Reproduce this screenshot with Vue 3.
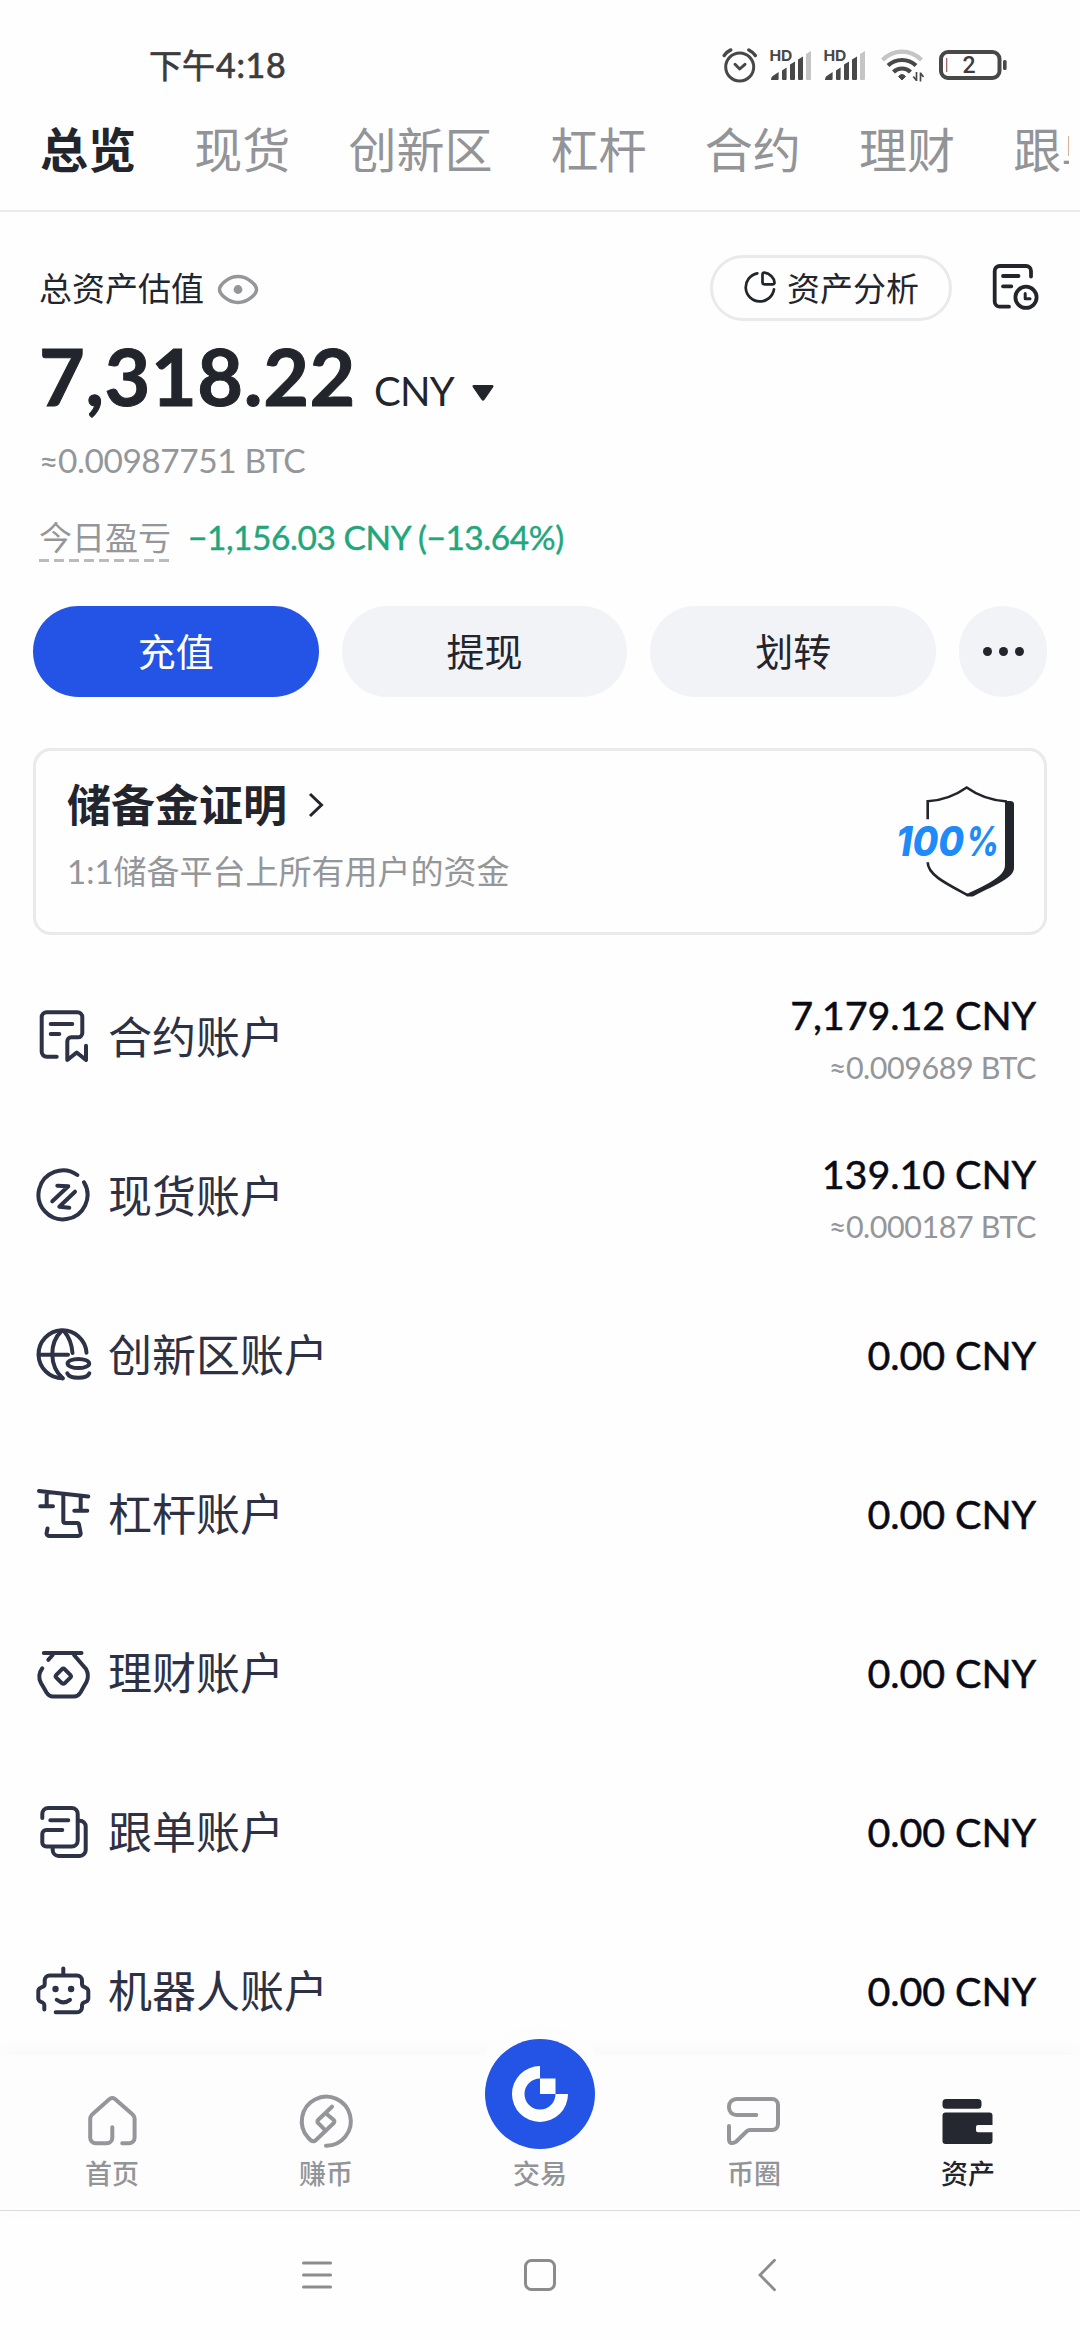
<script setup>
const tabs = ['总览', '现货', '创新区', '杠杆', '合约', '理财', '跟单']

const accounts = [
  {
    name: '合约账户',
    value: '7,179.12 CNY',
    btc: '≈0.009689 BTC',
    paths: [
      'M23.7 49.7H13.7a5 5 0 0 1-5-5V10.3a5 5 0 0 1 5-5H44.3a5 5 0 0 1 5 5V26a4.3 4.3 0 0 1-4.3 4.3H38.3a4 4 0 0 0-4 4V53L43.7 45.5 53 53V38.7',
      'M17.7 17H39.3M17.7 27H26.3'
    ]
  },
  {
    name: '现货账户',
    value: '139.10 CNY',
    btc: '≈0.000187 BTC',
    paths: [
      'M44.3 9A24.5 24.5 0 1 0 51 16.3',
      'M24.3 19.7L35.3 20.3 19.3 35.3M42 25.7L26.3 40.7 36.3 41.7'
    ]
  },
  {
    name: '创新区账户',
    value: '0.00 CNY',
    paths: [
      'M29.7 53.3A24 24 0 1 1 53.5 27.7',
      'M28.5 6C16 18 16 41 29.7 53.3M31 6C36 12 39 20 39.5 28M5.7 29.7H35',
      'M34.6 38.5a10.8 4.6 0 1 0 21.6 0a10.8 4.6 0 1 0-21.6 0z',
      'M34.3 48.3C37 54.2 53.6 54.2 56.3 48.3'
    ]
  },
  {
    name: '杠杆账户',
    value: '0.00 CNY',
    paths: [
      'M6 7L55.3 12.6M13.7 9V22.2M7.3 22.2H20M47.7 13V26.7M41.3 26.7H54.3',
      'M30.3 10V37a2 2 0 0 0 2 2H44a2 2 0 0 1 2 1.7l1.7 8.6a2.4 2.4 0 0 1-2.4 2.6H16a2.4 2.4 0 0 1-2.4-2.8L14.5 44.5'
    ]
  },
  {
    name: '理财账户',
    value: '0.00 CNY',
    paths: [
      'M10.8 10.1H48.5M19.7 12L15.3 16.8',
      'M41 12L53 26Q56.5 32.5 53.5 39L47.5 49.5Q45 53.5 41 53.5H20Q16 53.5 13.5 49.5L8 40Q4 32.5 9.3 25.3',
      'M28.8 26.3L23.3 31.8Q22 33.2 23.3 34.6L28.8 40.2Q30.3 41.4 31.8 40.2L37.3 34.6Q38.6 33.2 37.3 31.8L31.8 26.3Q30.3 25 28.8 26.3z'
    ]
  },
  {
    name: '跟单账户',
    value: '0.00 CNY',
    paths: [
      'M9.3 16V12a6 6 0 0 1 6-6H38.7a6 6 0 0 1 6 6V38.6a6 6 0 0 1-6 6H13.3a4 4 0 0 1-4-4V32a4 4 0 0 1 4-4H29.3',
      'M17.3 18.3H35.3M46 18.7H46.7a6 6 0 0 1 6 6V47.9a6 6 0 0 1-6 6H25.7a6 6 0 0 1-6-6V46'
    ]
  },
  {
    name: '机器人账户',
    value: '0.00 CNY',
    paths: [
      'M30.3 7.5V14',
      'M11.3 48.4V44a3 3 0 0 0-1.8-2.5L7.3 40.5a3.5 3.5 0 0 1-2-3V30a3.5 3.5 0 0 1 2-3L9.7 25.8a3 3 0 0 0 2-2.8V19.4a5 5 0 0 1 5-5H44a5 5 0 0 1 5 5V23a3 3 0 0 0 2 2.8L53.3 27a3.5 3.5 0 0 1 2 3V37.5a3.5 3.5 0 0 1-2 3L51 41.5a3 3 0 0 0-2 2.5V46.3a5 5 0 0 1-5 5H22.7',
      'M23.7 38.8Q30.3 44 37 38.8'
    ],
    dots: [[22.5, 28], [38.1, 28]]
  }
]
</script>

<template>
  <div class="page">
    <header class="status">
      <span class="time">下午<span class="clock">4:18</span></span>
      <div class="status-icons">
        <svg class="alarm" width="36" height="36" viewBox="0 0 36 36" fill="none" stroke="#484848" stroke-width="3" stroke-linecap="round" stroke-linejoin="round">
          <circle cx="17.7" cy="20" r="14" />
          <path d="M13 17.3L17.7 22 23 17.3" />
          <path d="M2.2 8.5Q4.5 5 8.8 2.9M26.8 2.9Q31 5 33.3 8.5" stroke-width="3.4" />
        </svg>
        <svg v-for="n in 2" :key="n" class="signal" width="43" height="34" viewBox="0 0 43 34" fill="#484848">
          <text x="0.4" y="12.8" textLength="23" lengthAdjust="spacingAndGlyphs" class="hd">HD</text>
          <path d="M2 32q0-3.5 2.5-4.5L9.6 24v7q0 1-1 1zM13 22.5l4.6-3V31q0 1-1 1h-2.6q-1 0-1-1zM21 16.6l5-3V31q0 1-1 1h-3q-1 0-1-1zM29 11.5l5-3V31q0 1-1 1h-3q-1 0-1-1z" />
          <path d="M37 6l5-3V31q0 1-1 1h-3q-1 0-1-1z" fill="#c5c5c5" />
        </svg>
        <svg class="wifi" width="44" height="36" viewBox="0 0 44 36" fill="none" stroke="#484848" stroke-width="4.2">
          <path d="M2.5 13Q11 4.6 22 4.6T41.5 13" stroke="#c5c5c5" />
          <path d="M8 18.5Q14 13 22 13T36 18.5" />
          <path d="M13.5 25Q17 21.5 22 21.5T30.5 25" />
          <path d="M18.5 29.5Q22 25.5 25.500 29.500L22 33z" fill="#484848" stroke-width="1" />
          <path d="M36.5 25v9M36.5 33.5l-3.2-4M40.5 34.500v-9M40.500 26l3 4" stroke-width="1.7" />
        </svg>
        <svg class="battery" width="70" height="32" viewBox="0 0 70 32">
          <rect x="2" y="3" width="58.5" height="26" rx="7" fill="none" stroke="#484848" stroke-width="4" />
          <path d="M7.7 9v14" stroke="#a5555a" stroke-width="1.2" />
          <rect x="64" y="11" width="3.6" height="10" rx="1.5" fill="#484848" />
          <text x="30" y="24" text-anchor="middle" class="level">2</text>
        </svg>
      </div>
    </header>

    <nav class="tabs">
      <span v-for="(tab, i) in tabs" :key="tab" class="tab" :class="{ active: i === 0 }">{{ tab }}</span>
    </nav>

    <main class="content">
      <section class="summary">
        <div class="summary-head">
          <span class="caption">总资产估值</span>
          <svg class="eye" width="42" height="32" viewBox="0 0 42 32" fill="none" stroke="#949699" stroke-width="3.5">
            <path d="M2.5 15.5C2.5 11 11 2.5 21 2.5S39.5 11 39.5 15.5 31 28.5 21 28.5 2.5 20 2.5 15.5z" />
            <circle cx="21" cy="15.5" r="4.4" fill="#949699" stroke="none" />
          </svg>
          <div class="analysis">
            <svg width="36" height="36" viewBox="0 0 36 36" fill="none" stroke="#23252c" stroke-width="2.7" stroke-linecap="round" stroke-linejoin="round">
              <path d="M14.3 3.3A14.2 14.2 0 1 0 31 19.3" />
              <path d="M19.5 4.500Q19.500 2.500 21.500 2.700C27 3.500 31.300 8 31.500 12.500Q31.500 14.300 29.500 14.300H21.500Q19.500 14.300 19.500 12.300z" />
            </svg>
            <span>资产分析</span>
          </div>
          <svg class="record" width="50" height="50" viewBox="0 0 50 50" fill="none" stroke="#23252c" stroke-width="3.8" stroke-linecap="round" stroke-linejoin="round">
            <path d="M18 43.7H8.7a5 5 0 0 1-5-5V8a5 5 0 0 1 5-5H35a5 5 0 0 1 5 5v5.5M12 13H27.5M12 23.3H20.3" />
            <circle cx="35" cy="34.3" r="10.6" />
            <path d="M34.2 30.5V35.8H39" stroke-width="3" />
          </svg>
        </div>
        <div class="balance">
          <span class="amount">7,318.22</span>
          <span class="unit">CNY</span>
          <svg width="24" height="18" viewBox="0 0 24 18"><path d="M3 1H21Q23.5 1 22 3.5L13.5 15.8Q12 17.6 10.5 15.8L2 3.5Q.5 1 3 1z" fill="#23252c" /></svg>
        </div>
        <div class="btc-total">≈0.00987751 BTC</div>
        <div class="pnl">
          <span class="pnl-label">今日盈亏</span>
          <span class="pnl-value">−1,156.03 CNY (−13.64%)</span>
        </div>
      </section>

      <section class="actions">
        <button class="action primary">充值</button>
        <button class="action">提现</button>
        <button class="action">划转</button>
        <button class="more"><i></i><i></i><i></i></button>
      </section>

      <section class="card">
        <div class="card-text">
          <h2>储备金证明
            <svg width="16" height="26" viewBox="0 0 16 26"><path d="M2 2L13.5 13 2 24" fill="none" stroke="#23252c" stroke-width="3" /></svg>
          </h2>
          <p>1:1储备平台上所有用户的资金</p>
        </div>
        <svg class="shield" width="124" height="120" viewBox="0 0 124 120">
          <path d="M32.7 38.3V20.3Q54 19 71.7 6.5Q89 19 112 20.5M32.7 81.3C32.7 94 52 103 72.5 114" fill="none" stroke="#23252c" stroke-width="2.6" />
          <path d="M110 20H116Q119 20.5 119 23V87C119 98 95 106 78 115.5H72L71 113.5C92 103 110 96 110 84z" fill="#23252c" />
          <text x="1" y="75" textLength="68" lengthAdjust="spacingAndGlyphs" class="full">100</text>
          <text x="71" y="75" textLength="33" lengthAdjust="spacingAndGlyphs" class="full">%</text>
        </svg>
      </section>

      <section class="accounts">
        <div v-for="a in accounts" :key="a.name" class="account">
          <svg width="60" height="60" viewBox="0 0 60 60" fill="none" stroke="#2e3247" stroke-width="4" stroke-linecap="round" stroke-linejoin="round">
            <path v-for="(d, i) in a.paths" :key="i" :d="d" />
            <circle v-for="(c, i) in a.dots || []" :key="'dot' + i" :cx="c[0]" :cy="c[1]" r="3.2" fill="#2e3247" stroke="none" />
          </svg>
          <span class="name">{{ a.name }}</span>
          <div class="figures">
            <div class="value">{{ a.value }}</div>
            <div v-if="a.btc" class="btc">{{ a.btc }}</div>
          </div>
        </div>
      </section>
    </main>

    <footer class="bottom">
      <div class="item">
        <svg width="60" height="60" viewBox="0 0 60 60" class="line-icon">
          <path d="M40.2 52.3H47a5.6 5.6 0 0 0 5.6-5.6V28q0-3-2.5-5L33 8q-2.7-2-5.4 0L10.7 23q-2.5 2-2.5 5V46.7a5.6 5.6 0 0 0 5.6 5.6H24.7a5.6 5.6 0 0 0 5.6-5.6V36.3" />
        </svg>
        <span>首页</span>
      </div>
      <div class="item">
        <svg width="60" height="60" viewBox="0 0 60 60" class="line-icon">
          <path d="M30 54.7A24.5 24.5 0 1 0 12 46.5L14.5 49q2.8 2.5 5.5 0L37.5 32.2q1.8-1.7 0-3.4L30 22.5" />
          <path d="M36 15.7L22.3 28.8q-1.8 1.7 0 3.4L29.5 39.5" />
        </svg>
        <span>赚币</span>
      </div>
      <div class="item">
        <div class="trade-btn">
          <svg width="56" height="56" viewBox="0 0 56 56" fill="#fff">
            <path d="M28 0A28 28 0 1 0 56 28H43.5A15.5 15.5 0 1 1 28 12.5z" />
            <path d="M28 12.5H43.5V28H28z" />
          </svg>
        </div>
        <span>交易</span>
      </div>
      <div class="item">
        <svg width="60" height="60" viewBox="0 0 60 60" class="line-icon">
          <path d="M32.3 24H12.5a7.5 7.5 0 0 1-7.5-7.5V15.5A7.5 7.5 0 0 1 12.5 8H48a6 6 0 0 1 6 6V33a6 6 0 0 1-6 6H26q-2 0-3.5 1.5L12 50.7Q5 54.5 5 48V35" />
        </svg>
        <span>币圈</span>
      </div>
      <div class="item current">
        <svg width="60" height="60" viewBox="0 0 60 60" fill="#262831">
          <rect x="4.5" y="8" width="39" height="9.7" rx="3.5" />
          <path d="M7.5 21.5H51.5a3 3 0 0 1 3 3V34H40a2 2 0 0 0-2 2v3.2a2 2 0 0 0 2 2H54.5V50a3 3 0 0 1-3 3H7.5a3 3 0 0 1-3-3V24.5a3 3 0 0 1 3-3z" />
        </svg>
        <span>资产</span>
      </div>
    </footer>

    <div class="sysnav">
      <svg width="32" height="34" viewBox="0 0 32 34" fill="none" stroke="#8c8c8c" stroke-width="3" stroke-linecap="round"><path d="M2.5 5H29.5M2.5 17H29.5M2.5 29H29.5" /></svg>
      <svg width="34" height="34" viewBox="0 0 34 34" fill="none" stroke="#8c8c8c" stroke-width="3"><rect x="2.5" y="2.5" width="29" height="29" rx="6" /></svg>
      <svg width="20" height="34" viewBox="0 0 20 34" fill="none" stroke="#8c8c8c" stroke-width="2.8" stroke-linecap="round"><path d="M17.5 2.3L3 17 17.5 31.7" /></svg>
    </div>
  </div>
</template>

<style>
body {
  margin: 0;
  background: #fefefe;
}
</style>

<style scoped>
.page {
  width: 1080px;
  height: 2340px;
  display: flex;
  flex-direction: column;
  overflow: hidden;
  background: #fefefe;
  color: #23252c;
  font-family: Lato, "Noto Sans CJK SC", sans-serif;
}
.status {
  display: flex;
  justify-content: space-between;
  align-items: center;
  height: 50px;
  padding: 40px 71px 0 149px;
  flex: none;
}
.time {
  font-size: 33px;
  line-height: 50px;
  color: #3c3c3c;
  -webkit-text-stroke: 0.7px #3c3c3c;
}
.clock {
  margin-left: 1px;
  font-size: 34px;
  letter-spacing: 0.7px;
}
.status-icons {
  display: flex;
  align-items: center;
}
.signal {
  margin-left: 11px;
}
.wifi {
  margin-left: 14px;
}
.battery {
  margin-left: 15px;
}
.hd {
  font: 700 15px Inter, sans-serif;
}
.level {
  font: 500 23px Roboto, sans-serif;
  fill: #3c3c3c;
}
.tabs {
  display: flex;
  align-items: center;
  gap: 58.2px;
  height: 120px;
  margin-right: 11px;
  padding-left: 40px;
  overflow: hidden;
  flex: none;
  font-size: 48px;
  white-space: nowrap;
  color: #929498;
}
.tab {
  flex: none;
  line-height: 70px;
}
.tab.active {
  color: #23252c;
  font-weight: 700;
}
.content {
  flex: 1;
  min-height: 0;
  overflow: hidden;
  border-top: 2px solid #ebebeb;
}
.summary {
  padding: 43px 33px 0 39px;
}
.summary-head {
  display: flex;
  align-items: center;
  height: 66px;
}
.caption {
  font-size: 33px;
  line-height: 50px;
}
.eye {
  margin: 4px 0 0 13px;
}
.analysis {
  box-sizing: border-box;
  display: flex;
  align-items: center;
  gap: 8px;
  width: 242px;
  height: 66px;
  margin-left: auto;
  padding-left: 30px;
  border: 3px solid #e9eaea;
  border-radius: 33px;
  font-size: 33px;
  line-height: 50px;
}
.record {
  margin: 0 6px 0 39px;
}
.balance {
  display: flex;
  align-items: baseline;
  height: 95px;
  margin-top: 7px;
  line-height: 95px;
}
.amount {
  font-size: 79px;
  font-weight: 700;
  letter-spacing: 0.6px;
  -webkit-text-stroke: 1px #23252c;
}
.unit {
  margin-left: 18px;
  font-size: 40px;
  letter-spacing: -0.7px;
}
.balance svg {
  margin-left: 17px;
  position: relative;
  top: -4px;
}
.btc-total {
  margin-top: 17px;
  font-size: 33.5px;
  line-height: 40px;
  letter-spacing: -0.45px;
  color: #949699;
}
.pnl {
  display: flex;
  align-items: flex-start;
  height: 52px;
  margin-top: 37px;
  line-height: 40px;
}
.pnl-label {
  height: 45px;
  font-size: 33px;
  color: #949699;
  background: repeating-linear-gradient(90deg, #b9bbbe 0 10px, transparent 10px 15px) left bottom / 100% 3px no-repeat;
}
.pnl-value {
  margin-left: 17px;
  font-size: 33.5px;
  letter-spacing: -0.45px;
  color: #22a67b;
  -webkit-text-stroke: 0.4px #22a67b;
}
.actions {
  display: flex;
  gap: 23px;
  height: 91px;
  margin-top: 37px;
  padding: 0 33px;
}
.action,
.more {
  border: 0;
  padding: 0;
  border-radius: 46px;
  background: #f1f3f7;
  color: #23252c;
  font: 38px/91px Lato, "Noto Sans CJK SC", sans-serif;
}
.action {
  flex: 1;
}
.action.primary {
  background: #2454e6;
  color: #fff;
}
.more {
  display: flex;
  align-items: center;
  justify-content: center;
  gap: 7px;
  width: 88px;
}
.more i {
  width: 9px;
  height: 9px;
  border-radius: 50%;
  background: #23252c;
}
.card {
  box-sizing: border-box;
  display: flex;
  justify-content: space-between;
  height: 187px;
  margin: 51px 33px 22px;
  padding: 30px 25px 0 31px;
  border: 3px solid #e9eaea;
  border-radius: 18px;
}
.card h2 {
  display: flex;
  align-items: center;
  gap: 21px;
  margin: -8px 0 0;
  font-size: 44px;
  line-height: 64px;
}
.card p {
  margin: 10px 0 0;
  font-size: 33px;
  line-height: 48px;
  color: #949699;
}
.full {
  font: italic 800 41px Inter, sans-serif;
  fill: #1f8bf8;
}
.account {
  display: flex;
  align-items: center;
  height: 159px;
  padding: 0 44px 0 33px;
}
.name {
  margin-left: 15px;
  font-size: 44px;
  line-height: 64px;
  color: #2e3144;
}
.figures {
  margin-left: auto;
  text-align: right;
}
.value {
  font-size: 39.5px;
  line-height: 60px;
  letter-spacing: -0.1px;
  color: #0a0b14;
  -webkit-text-stroke: 0.5px #0a0b14;
}
.btc {
  font-size: 30.5px;
  line-height: 44px;
  letter-spacing: -0.45px;
  color: #949699;
}
.bottom {
  display: flex;
  flex: none;
  height: 155px;
  padding: 0 5px;
  background: #fdfdfe;
  border-bottom: 1px solid #dcdcdc;
  box-shadow: 0 -4px 20px rgba(30, 40, 80, 0.03);
  position: relative;
}
.item {
  display: flex;
  flex: 1;
  flex-direction: column;
  align-items: center;
  justify-content: flex-end;
  padding-bottom: 16px;
  color: #929498;
  font-size: 27px;
  font-weight: 500;
  line-height: 40px;
}
.item svg {
  margin-bottom: 3px;
}
.line-icon {
  fill: none;
  stroke: #949699;
  stroke-width: 4;
  stroke-linecap: round;
  stroke-linejoin: round;
}
.trade-btn {
  display: flex;
  flex: none;
  align-items: center;
  justify-content: center;
  width: 110px;
  height: 110px;
  margin-bottom: 5px;
  border-radius: 50%;
  background: #2454e6;
  box-shadow: 0 0 0 14px #fdfdfe;
}
.trade-btn svg {
  margin: 0;
}
.current {
  color: #23252c;
}
.sysnav {
  display: flex;
  flex: none;
  align-items: center;
  height: 129px;
  padding: 0 0 0 301px;
}
.sysnav svg:nth-child(2) {
  margin-left: 190px;
}
.sysnav svg:nth-child(3) {
  margin-left: 200px;
}
.sysnav svg {
  margin-bottom: 1px;
}
</style>
